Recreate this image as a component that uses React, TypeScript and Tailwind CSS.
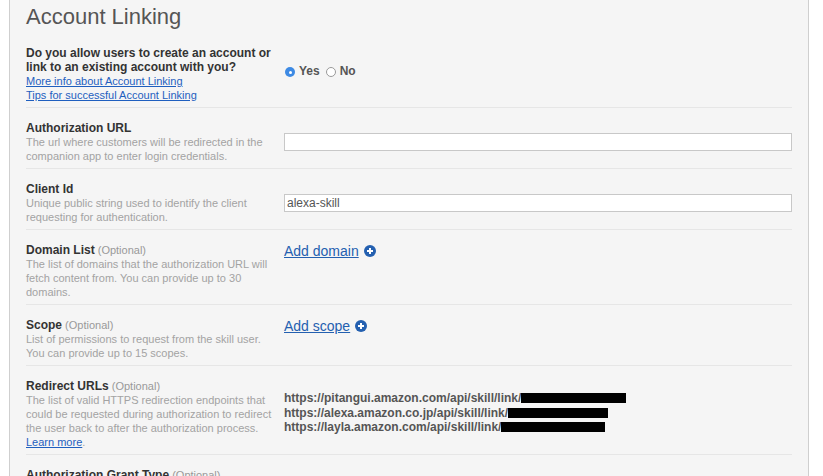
import React from "react";

const font = { fontFamily: '"Liberation Sans", Arial, Helvetica, sans-serif' };

function PlusCircle() {
  return (
    <svg width="12" height="12" viewBox="0 0 12 12" className="inline-block ml-[5px] align-[-1px]">
      <circle cx="6" cy="6" r="6" fill="#2460b0" />
      <path d="M6 3v6M3 6h6" stroke="#fff" strokeWidth="2" />
    </svg>
  );
}

function Row({
  label,
  optional,
  children,
  right,
  last,
}: {
  label: string;
  optional?: boolean;
  children?: React.ReactNode;
  right?: React.ReactNode;
  last?: boolean;
}) {
  return (
    <div className={`flex pt-[13px] pb-[5px] ${last ? "" : "border-b border-[#e6e6e6]"}`}>
      <div className="w-[258px] shrink-0 pr-[8px]">
        <div className="text-[12px] leading-[14px] font-bold text-[#333]">
          {label}
          {optional && <span className="font-normal text-[11px] text-[#999]"> (Optional)</span>}
        </div>
        <div className="text-[11px] leading-[14px] text-[#a3a3a3]">{children}</div>
      </div>
      <div className="flex-1">{right}</div>
    </div>
  );
}

function Redacted({ w }: { w: number }) {
  return <span className="inline-block h-[10px] bg-black align-[-1px]" style={{ width: w }} />;
}

export default function App() {
  return (
    <div className="w-[823px] h-[476px] overflow-hidden bg-white" style={font}>
      <div className="ml-[9px] w-[800px] h-full border-x border-[#cfcfcf] bg-[#f5f5f5] px-4">
        <div className="h-[33px] pt-[4px] text-[22px] leading-[26px] text-[#555]">Account Linking</div>

        {/* account linking question */}
        <div className="flex pt-[13px] pb-[5px] border-b border-[#e6e6e6]">
          <div className="w-[258px] shrink-0 pr-[8px]">
            <div className="text-[12px] leading-[14px] font-bold text-[#333]">
              Do you allow users to create an account or link to an existing account with you?
            </div>
            <div className="text-[11px] leading-[14px]">
              <a href="#" className="block text-[#1f5fbf] underline">More info about Account Linking</a>
              <a href="#" className="block text-[#1f5fbf] underline">Tips for successful Account Linking</a>
            </div>
          </div>
          <div className="flex-1">
            <div className="mt-[18px] flex items-center text-[12px] leading-[14px] font-bold text-[#555]">
              <span className="ml-[1px] w-[10px] h-[10px] rounded-full bg-[#3d8ae4] flex items-center justify-center mt-[2px]">
                <span className="w-[3px] h-[3px] rounded-full bg-white" />
              </span>
              <span className="ml-[4px]">Yes</span>
              <span className="ml-[6px] w-[10px] h-[10px] rounded-full bg-white border border-[#9a9a9a] mt-[2px]" />
              <span className="ml-[4px]">No</span>
            </div>
          </div>
        </div>

        <Row
          label="Authorization URL"
          right={<div className="mt-[12px] h-[18px] bg-white border border-[#c8c8c8]" />}
        >
          The url where customers will be redirected in the companion app to enter login credentials.
        </Row>

        <Row
          label="Client Id"
          right={
            <div className="mt-[12px] h-[18px] bg-white border border-[#c8c8c8] pl-[2px] text-[12px] leading-[16px] text-[#555]">
              alexa-skill
            </div>
          }
        >
          Unique public string used to identify the client requesting for authentication.
        </Row>

        <Row
          label="Domain List"
          optional
          right={
            <div className="text-[14px] leading-[18px] -mt-[1px]">
              <a href="#" className="text-[#2460b0] underline">Add domain</a>
              <PlusCircle />
            </div>
          }
        >
          The list of domains that the authorization URL will fetch content from. You can provide up to 30 domains.
        </Row>

        <Row
          label="Scope"
          optional
          right={
            <div className="text-[14px] leading-[18px] -mt-[1px]">
              <a href="#" className="text-[#2460b0] underline">Add scope</a>
              <PlusCircle />
            </div>
          }
        >
          List of permissions to request from the skill user. You can provide up to 15 scopes.
        </Row>

        <Row
          label="Redirect URLs"
          optional
          right={
            <div className="mt-[12px] text-[12px] leading-[14.5px] font-bold text-[#555]">
              <div>https://pitangui.amazon.com/api/skill/link/<Redacted w={105} /></div>
              <div>https://alexa.amazon.co.jp/api/skill/link/<Redacted w={100} /></div>
              <div>https://layla.amazon.com/api/skill/link/<Redacted w={104} /></div>
            </div>
          }
        >
          The list of valid HTTPS redirection endpoints that could be requested during authorization to redirect the
          user back to after the authorization process.{" "}
          <br />
          <a href="#" className="text-[#1f5fbf] underline">Learn more</a>.
        </Row>

        <Row label="Authorization Grant Type" optional last />
      </div>
    </div>
  );
}
